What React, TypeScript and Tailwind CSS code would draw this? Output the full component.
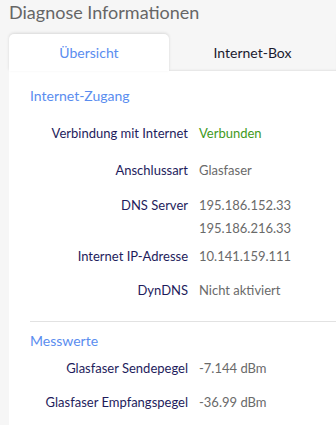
import React from "react";

const rows: { label: string; values: string[]; green?: boolean; h: string }[] = [
  { label: "Verbindung mit Internet", values: ["Verbunden"], green: true, h: "h-[37px]" },
  { label: "Anschlussart", values: ["Glasfaser"], h: "h-[35px]" },
  { label: "DNS Server", values: ["195.186.152.33", "195.186.216.33"], h: "h-[51px]" },
  { label: "Internet IP-Adresse", values: ["10.141.159.111"], h: "h-[34px]" },
  { label: "DynDNS", values: ["Nicht aktiviert"], h: "h-[35px]" },
];

function Row({ label, values, green }: { label: string; values: string[]; green?: boolean }) {
  return (
    <div className="flex text-[13px] leading-[23px]">
      <div className="w-[158px] text-right text-[#1e1c5c] shrink-0">{label}</div>
      <div className="pl-[11px]">
        {values.map((v) => (
          <div key={v} className={green ? "text-[#3f9a1c]" : "text-[#6a6a6a]"}>
            {v}
          </div>
        ))}
      </div>
    </div>
  );
}

export default function App() {
  return (
    <div
      className="w-[336px] h-[425px] overflow-hidden bg-[#f6f6f6]"
      style={{ fontFamily: "Lato, 'Noto Sans', sans-serif" }}
    >
      <div className="pl-[9px] h-[34px] text-[18px] leading-[24px] text-[#666666]">
        Diagnose Informationen
      </div>
      <div className="ml-[9px]">
        <div className="flex h-[37px] text-[14px]">
          <div className="w-[160px] bg-white rounded-t-[5px] shadow-[0_-1px_3px_rgba(0,0,0,0.12)] flex items-center justify-center text-[#5a8def] relative z-10">
            Übersicht
          </div>
          <div className="flex-1 flex items-center justify-center text-[#1a1a2e] shadow-[inset_0_-2px_2px_-1px_rgba(0,0,0,0.08)]">
            Internet-Box
          </div>
        </div>
        <div className="bg-white h-[400px] pl-[21px] pt-[13px]">
          <div className="text-[14px] leading-[24px] text-[#5a8def]">Internet-Zugang</div>
          <div className="pt-[14px]">
            {rows.map((r) => (
              <div key={r.label} className={r.h}>
                <Row label={r.label} values={r.values} green={r.green} />
              </div>
            ))}
          </div>
          <div className="border-t border-[#e2e2e2] mt-[7px]" />
          <div className="text-[14px] leading-[24px] text-[#5a8def] mt-[7px]">Messwerte</div>
          <div className="pt-[4px]">
            <div className="h-[34px]">
              <Row label="Glasfaser Sendepegel" values={["-7.144 dBm"]} />
            </div>
            <div className="h-[34px]">
              <Row label="Glasfaser Empfangspegel" values={["-36.99 dBm"]} />
            </div>
          </div>
        </div>
      </div>
    </div>
  );
}
